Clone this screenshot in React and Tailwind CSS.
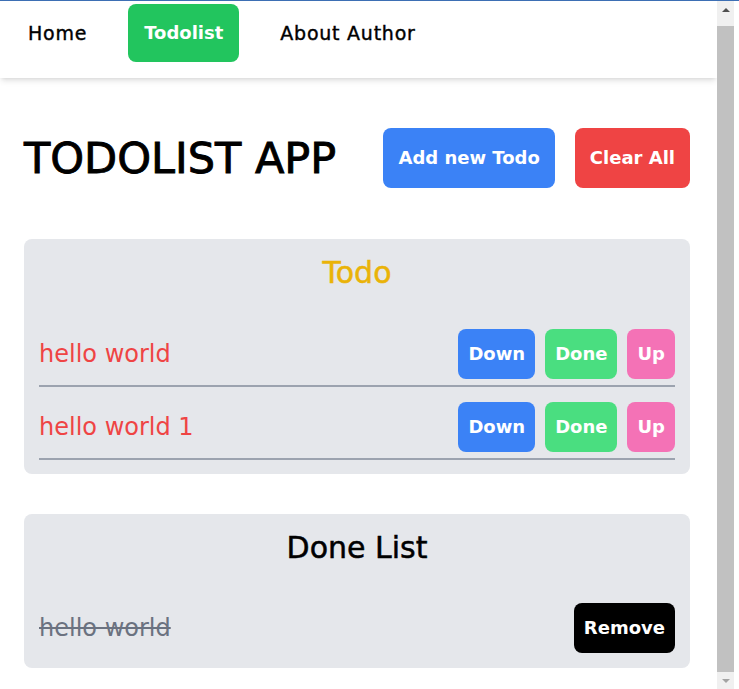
import React from 'react';

const todos = ['hello world', 'hello world 1'];
const done = ['hello world'];

const NavItem = ({ label, active }) => (
  <a
    href="#"
    className={
      active
        ? 'flex h-[58px] items-center rounded-lg bg-[#22c55e] px-4 text-lg font-bold text-white'
        : 'flex h-[58px] items-center px-4 text-[19px] tracking-[0.04em] text-black [-webkit-text-stroke:0.4px_currentColor]'
    }
  >
    {label}
  </a>
);

const TodoRow = ({ text, first }) => (
  <div className={`flex items-center justify-between border-b-2 border-[#9ca3af] pb-[6px] ${first ? 'mt-[38px]' : 'mt-[15px]'}`}>
    <span className="text-2xl text-[#ef4444]">{text}</span>
    <div className="flex gap-2.5">
      <button className="h-[50px] rounded-lg bg-[#3b82f6] px-2.5 text-lg font-bold text-white">Down</button>
      <button className="h-[50px] rounded-lg bg-[#4ade80] px-2.5 text-lg font-bold text-white">Done</button>
      <button className="h-[50px] rounded-lg bg-[#f472b6] px-2.5 text-lg font-bold text-white">Up</button>
    </div>
  </div>
);

const Scrollbar = () => (
  <div className="flex h-full w-[17px] shrink-0 flex-col items-center bg-[#f0f0f0]">
    <div className="flex h-[17px] w-full items-center justify-center">
      <div className="h-0 w-0 border-x-[4px] border-b-[4px] border-x-transparent border-b-[#505050]" />
    </div>
    <div className="mt-[8px] w-full flex-1 bg-[#c1c1c1]" />
    <div className="flex h-[17px] w-full items-center justify-center">
      <div className="h-0 w-0 border-x-[4px] border-t-[4px] border-x-transparent border-t-[#a3a3a3]" />
    </div>
  </div>
);

export default function App() {
  return (
    <div className="flex h-screen overflow-hidden border-t border-[#3d6fb4] bg-white font-['DejaVu_Sans',sans-serif]">
      <div className="w-[717px] shrink-0">
        {/* Navbar */}
        <nav className="flex h-[77px] items-start gap-[25px] bg-white pl-3 pt-[3px] shadow-md">
          <NavItem label="Home" />
          <NavItem label="Todolist" active />
          <NavItem label="About Author" />
        </nav>

        <main className="px-6 pb-12 pt-[50px] pr-[27px]">
          <div className="flex items-center justify-between">
            <h1 className="text-[43px] leading-none text-black [-webkit-text-stroke:0.9px_currentColor]">TODOLIST APP</h1>
            <div className="flex gap-5">
              <button className="h-[60px] rounded-lg bg-[#3b82f6] px-[15px] text-lg font-bold text-white">Add new Todo</button>
              <button className="h-[60px] rounded-lg bg-[#ef4444] px-[15px] text-lg font-bold text-white">Clear All</button>
            </div>
          </div>

          {/* Todo list */}
          <section className="mt-[51px] rounded-lg bg-[#e5e7eb] px-[15px] pb-[14px] pt-4">
            <h2 className="text-center text-3xl text-[#eab308] [-webkit-text-stroke:0.5px_currentColor]">Todo</h2>
            {todos.map((t, i) => (
              <TodoRow key={t} text={t} first={i === 0} />
            ))}
          </section>

          {/* Done list */}
          <section className="mt-10 rounded-lg bg-[#e5e7eb] px-[15px] pb-[15px] pt-4">
            <h2 className="text-center text-3xl text-black [-webkit-text-stroke:0.5px_currentColor]">Done List</h2>
            {done.map((t) => (
              <div key={t} className="mt-[37px] flex items-center justify-between">
                <span className="text-2xl text-[#6b7280] line-through">{t}</span>
                <button className="h-[50px] rounded-lg bg-black px-2.5 text-lg font-bold text-white">Remove</button>
              </div>
            ))}
          </section>
        </main>
      </div>
      <Scrollbar />
    </div>
  );
}
